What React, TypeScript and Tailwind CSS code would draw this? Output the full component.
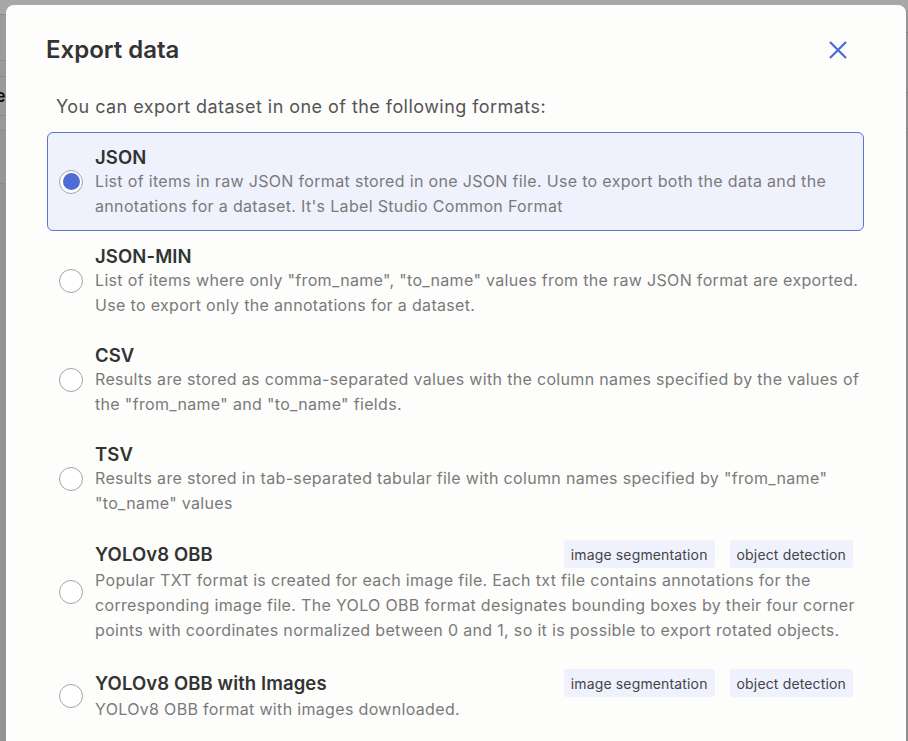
import React from "react";

type Item = {
  title: string;
  desc: string[];
  tags?: string[];
  selected?: boolean;
};

const items: Item[] = [
  {
    title: "JSON",
    desc: [
      "List of items in raw JSON format stored in one JSON file. Use to export both the data and the",
      "annotations for a dataset. It's Label Studio Common Format",
    ],
    selected: true,
  },
  {
    title: "JSON-MIN",
    desc: [
      'List of items where only "from_name", "to_name" values from the raw JSON format are exported.',
      "Use to export only the annotations for a dataset.",
    ],
  },
  {
    title: "CSV",
    desc: [
      "Results are stored as comma-separated values with the column names specified by the values of",
      'the "from_name" and "to_name" fields.',
    ],
  },
  {
    title: "TSV",
    desc: [
      'Results are stored in tab-separated tabular file with column names specified by "from_name"',
      '"to_name" values',
    ],
  },
  {
    title: "YOLOv8 OBB",
    desc: [
      "Popular TXT format is created for each image file. Each txt file contains annotations for the",
      "corresponding image file. The YOLO OBB format designates bounding boxes by their four corner",
      "points with coordinates normalized between 0 and 1, so it is possible to export rotated objects.",
    ],
    tags: ["image segmentation", "object detection"],
  },
  {
    title: "YOLOv8 OBB with Images",
    desc: ["YOLOv8 OBB format with images downloaded."],
    tags: ["image segmentation", "object detection"],
  },
];

function Radio({ checked }: { checked?: boolean }) {
  return (
    <div className="flex h-[24px] w-[24px] shrink-0 items-center justify-center rounded-full border border-[#a3a3a3] bg-white">
      {checked && <div className="h-[17px] w-[17px] rounded-full bg-[#4f6bd6]" />}
    </div>
  );
}

function Row({ item }: { item: Item }) {
  const base = "flex items-center gap-[12px] rounded-[6px] border pl-[11px] pr-[10px]";
  const tone = item.selected ? "border-[#5b74d8] bg-[#eff2fd]" : "border-transparent";
  const pad = item.tags ? "pt-[11px] pb-[13px]" : "py-[11px]";
  return (
    <div className={`${base} ${tone} ${pad}`}>
      <Radio checked={item.selected} />
      <div className="flex min-w-0 flex-1 flex-col">
        <div className="flex items-center justify-between">
          <div
            className={
              item.tags
                ? "pt-[1px] text-[18.5px] font-semibold leading-[27px] tracking-[0.1px] text-[#333]"
                : "pt-[1px] text-[18.5px] font-semibold leading-[24px] tracking-[0.1px] text-[#333]"
            }
          >
            {item.title}
          </div>
          {item.tags && (
            <div className="flex gap-[15px]">
              {item.tags.map((t) => (
                <span
                  key={t}
                  className="flex h-[28px] items-center rounded-[3px] bg-[#eff1fd] px-[7px] text-[14px] tracking-[0.15px] text-[#444]"
                >
                  {t}
                </span>
              ))}
            </div>
          )}
        </div>
        <div className="text-[16px] leading-[25px] tracking-[0.33px] text-[#7a7a7a]">
          {item.desc.map((l, i) => (
            <div key={i} className="whitespace-nowrap">
              {l}
            </div>
          ))}
        </div>
      </div>
    </div>
  );
}

export default function App() {
  return (
    <div
      className="relative h-[741px] w-[908px] overflow-hidden bg-[#909090]"
      style={{ fontFamily: "Inter, 'Noto Sans', sans-serif" }}
    >
      {/* underlying page, dimmed */}
      <div className="flex h-full w-full">
        <div className="flex w-[454px] flex-col">
          <div className="h-[14px] bg-[#a7a7a7]" />
          <div className="h-[46px] border-t border-[#8a8a8a] bg-[#9c9c9c]" />
          <div className="h-[16px] border-t border-[#8a8a8a] bg-[#9a9a9a]" />
          <div className="relative h-[39px] border-t border-[#8a8a8a] bg-[#9a9a9a]">
            <span className="absolute left-[-5px] top-[10px] text-[18px] font-semibold leading-none text-[#111]">e</span>
          </div>
          <div className="h-[15px] border-t border-[#8a8a8a] bg-[#999]" />
          <div className="h-[53px] border-t border-[#8a8a8a] bg-[#969696]" />
          <div className="flex-1 border-t border-[#888] bg-[#929292]" />
        </div>
        <div className="flex flex-1 flex-col">
          <div className="h-[10px] bg-[#a7a7a7]" />
          <div className="h-[22px] bg-[#969696]" />
          <div className="h-[60px] border-t border-[#808080] bg-[#919191]" />
          <div className="h-[36px] border-t border-[#808080] bg-[#909090]" />
          <div className="flex-1 border-t border-[#808080] bg-[#8e8e8e]" />
        </div>
      </div>

      {/* modal */}
      <div className="absolute left-[6px] top-[5px] h-[800px] w-[900px] rounded-[8px] bg-[#fdfdfc]">
        <div className="flex h-[88px] items-center justify-between pl-[40px] pr-[59px] pt-[2px]">
          <h2 className="text-[24px] font-semibold text-[#333]">Export data</h2>
          <svg width="18" height="18" viewBox="0 0 18 18" fill="none">
            <path d="M1 1L17 17M17 1L1 17" stroke="#4a6ad6" strokeWidth="2.2" />
          </svg>
        </div>
        <div className="pl-[41px] pr-[42px]">
          <div className="mb-[13px] mt-[1px] pl-[9px] text-[18px] leading-[25px] tracking-[0.45px] text-[#555]">
            You can export dataset in one of the following formats:
          </div>
          <div className="flex flex-col">
            {items.map((it) => (
              <Row key={it.title} item={it} />
            ))}
          </div>
        </div>
      </div>
    </div>
  );
}
